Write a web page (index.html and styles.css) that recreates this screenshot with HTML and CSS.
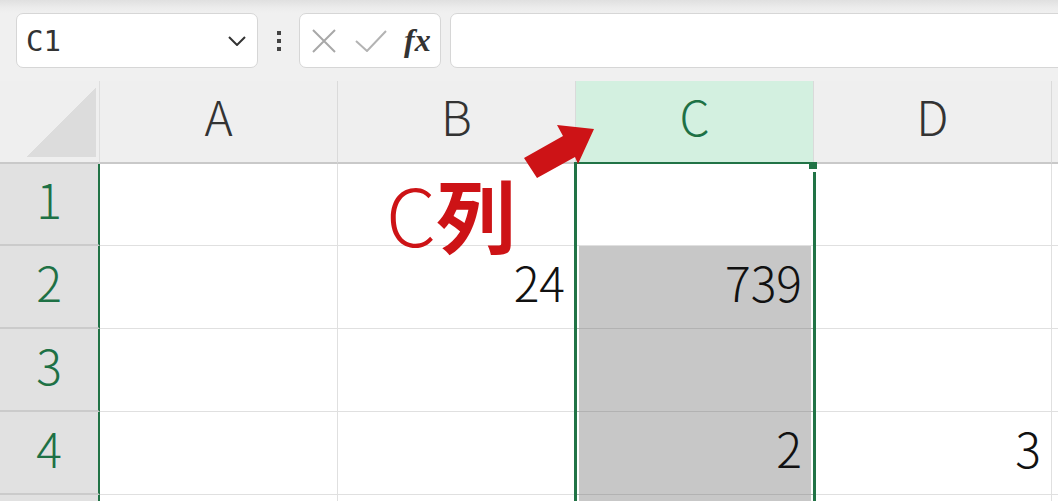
FILE: index.html
```html
<!DOCTYPE html>
<html lang="ja">
<head>
    <meta charset="UTF-8">
    <meta name="viewport" content="width=device-width, initial-scale=1.0">
    <title>C列の選択</title>
    <link rel="stylesheet" href="styles.css">
</head>
<body>

    <!-- リボン下の影 -->
    <div class="chrome-shadow"></div>

    <!-- 数式バー -->
    <div class="formula-bar">
        <div class="name-box">
            <span class="name-ref">C1</span>
            <svg class="chevron" width="18" height="10" viewBox="0 0 18 10">
                <polyline points="1,1 9,9 17,1" fill="none" stroke="#333" stroke-width="2"/>
            </svg>
        </div>
        <div class="bar-grip"><span></span><span></span><span></span></div>
        <div class="fx-buttons">
            <svg class="icon-cancel" width="24" height="24" viewBox="0 0 24 24">
                <path d="M1 1 L23 23 M23 1 L1 23" stroke="#a8a8a8" stroke-width="2" fill="none"/>
            </svg>
            <svg class="icon-enter" width="32" height="22" viewBox="0 0 32 22">
                <polyline points="1,11 12,21 31,1" fill="none" stroke="#b3b3b3" stroke-width="2"/>
            </svg>
            <span class="fx">fx</span>
        </div>
        <div class="formula-input"></div>
    </div>

    <!-- シート -->
    <div class="sheet">
        <div class="corner"></div>
        <div class="col-head">A</div>
        <div class="col-head">B</div>
        <div class="col-head col-head--active">C</div>
        <div class="col-head">D</div>
        <div class="col-head"></div>

        <div class="row-head">1</div>
        <div class="cell"></div>
        <div class="cell"></div>
        <div class="cell"></div>
        <div class="cell"></div>
        <div class="cell"></div>

        <div class="row-head">2</div>
        <div class="cell"></div>
        <div class="cell">24</div>
        <div class="cell cell--shaded">739</div>
        <div class="cell"></div>
        <div class="cell"></div>

        <div class="row-head">3</div>
        <div class="cell"></div>
        <div class="cell"></div>
        <div class="cell cell--shaded"></div>
        <div class="cell"></div>
        <div class="cell"></div>

        <div class="row-head">4</div>
        <div class="cell"></div>
        <div class="cell"></div>
        <div class="cell cell--shaded">2</div>
        <div class="cell">3</div>
        <div class="cell"></div>

        <div class="row-head"></div>
        <div class="cell"></div>
        <div class="cell"></div>
        <div class="cell cell--shaded"></div>
        <div class="cell"></div>
        <div class="cell"></div>

        <!-- 列選択の枠 -->
        <div class="selection"><span class="fill-handle"></span></div>

        <!-- 注釈 -->
        <svg class="callout-arrow" width="80" height="62" viewBox="520 120 80 62">
            <polygon points="524,158 563,136 557,125 594,129 578,164 575,157 537,178" fill="#cd1316"/>
        </svg>
        <div class="callout-label"><span class="callout-latin">C</span>列</div>
    </div>

</body>
</html>
```

FILE: styles.css
```css
* {
    box-sizing: border-box;
}

body {
    margin: 0;
    width: 1058px;
    height: 501px;
    overflow: hidden;
    background-color: #f0f0f0;
    font-family: "Noto Sans CJK JP", "Noto Sans", sans-serif;
    color: #222;
}

.chrome-shadow {
    height: 13px;
    background: linear-gradient(#e0e0e0, #ececec 60%, #f0f0f0);
}

/* 数式バー */
.formula-bar {
    display: flex;
    height: 55px;
    padding-left: 16px;
}

.name-box {
    width: 242px;
    background-color: #fff;
    border: 1px solid #d6d6d6;
    border-radius: 7px;
    display: flex;
    align-items: center;
    justify-content: space-between;
    padding: 0 11px 0 9px;
}

.name-ref {
    font-family: "DejaVu Sans Mono", monospace;
    font-size: 29px;
    color: #333;
}

.bar-grip {
    width: 41px;
    display: flex;
    flex-direction: column;
    align-items: center;
    justify-content: center;
    gap: 4px;
}

.bar-grip span {
    width: 4px;
    height: 4px;
    background-color: #444;
}

.fx-buttons {
    width: 142px;
    background-color: #fff;
    border: 1px solid #d6d6d6;
    border-radius: 7px;
    display: flex;
    align-items: center;
    padding-left: 12px;
}

.icon-enter {
    margin-left: 19px;
}

.fx {
    margin-left: 17px;
    font-family: "Liberation Serif", serif;
    font-style: italic;
    font-weight: bold;
    font-size: 32px;
    color: #333;
}

.formula-input {
    flex: 1;
    margin-left: 9px;
    margin-right: -20px;
    background-color: #fff;
    border: 1px solid #d6d6d6;
    border-radius: 7px;
}

/* シート */
.sheet {
    position: relative;
    margin-top: 13px;
    display: grid;
    grid-template-columns: 100px repeat(4, 238px) 1fr;
    grid-template-rows: 83px 82px repeat(3, 83px) 1fr;
    height: 420px;
    font-size: 48px;
    font-weight: 300;
}

.corner {
    background-color: #efefef;
    background-image: linear-gradient(to bottom right, transparent 50%, #dcdcdc 50%);
    background-size: 70px 69px;
    background-position: right 3px bottom 5px;
    background-repeat: no-repeat;
    border-right: 1px solid #dedede;
    border-bottom: 2px solid #c9c9c9;
}

.col-head {
    background-color: #efefef;
    border-right: 1px solid #dadada;
    border-bottom: 2px solid #c9c9c9;
    display: flex;
    align-items: center;
    justify-content: center;
    padding-bottom: 13px;
    color: #333;
}

.col-head--active {
    background-color: #d3f0e0;
    color: #1e7145;
}

.row-head {
    background-color: #e1e1e1;
    border-right: 2px solid #217346;
    border-bottom: 2px solid #cbcbcb;
    display: flex;
    align-items: center;
    justify-content: center;
    padding-bottom: 12px;
    color: #1e7145;
}

.cell {
    background-color: #fff;
    border-right: 1px solid #e0e0e0;
    border-bottom: 1px solid #e0e0e0;
    display: flex;
    align-items: center;
    justify-content: flex-end;
    padding-right: 10px;
    padding-bottom: 12px;
    color: #111;
}

.cell--shaded {
    background-color: #c7c7c7;
    border-bottom-color: #b2b2b2;
    box-shadow: inset 3px 0 #fff, inset -2px 0 #fff;
    padding-right: 11px;
}

/* 列選択の枠 */
.selection {
    position: absolute;
    left: 574px;
    top: 81px;
    bottom: 0;
    width: 242px;
    border: 3px solid #217346;
    border-top-width: 2px;
    border-bottom: none;
}

.fill-handle {
    position: absolute;
    top: -2px;
    right: -4px;
    width: 8px;
    height: 10px;
    background-color: #217346;
    border-bottom: 3px solid #fff;
}

/* 注釈 */
.callout-arrow {
    position: absolute;
    left: 520px;
    top: 39px;
}

.callout-label {
    position: absolute;
    left: 386px;
    top: 91px;
    font-size: 80px;
    line-height: 1;
    font-weight: bold;
    color: #cd1316;
}

.callout-latin {
    font-weight: 300;
}
```
